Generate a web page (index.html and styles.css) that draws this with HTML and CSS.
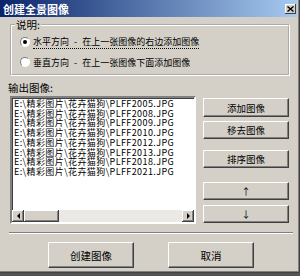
FILE: index.html
```html
<!DOCTYPE html>
<html lang="zh-CN">
<head>
    <meta charset="UTF-8">
    <meta name="viewport" content="width=device-width, initial-scale=1.0">
    <title>创建全景图像</title>
    <link rel="stylesheet" href="styles.css">
</head>
<body>
    <div class="window">
        <div class="titlebar">
            <span class="title">创建全景图像</span>
            <span class="close">
                <svg width="7" height="6" viewBox="0 0 7 6"><path d="M0.5 0.5 L6.5 5.5 M6.5 0.5 L0.5 5.5" stroke="#000" stroke-width="1.4" fill="none"/></svg>
            </span>
        </div>

        <div class="content">
            <fieldset class="group">
                <legend>说明:</legend>
                <label class="option">
                    <span class="radio checked"></span>
                    <span class="focus">水平方向 - 在上一张图像的右边添加图像</span>
                </label>
                <label class="option">
                    <span class="radio"></span>
                    <span>垂直方向 - 在上一张图像下面添加图像</span>
                </label>
            </fieldset>

            <div class="caption">输出图像:</div>

            <div class="main">
                <div class="listbox">
                    <ul class="items">
                        <li>E:\精彩图片\花卉猫狗\PLFF2005.JPG</li>
                        <li>E:\精彩图片\花卉猫狗\PLFF2008.JPG</li>
                        <li>E:\精彩图片\花卉猫狗\PLFF2009.JPG</li>
                        <li>E:\精彩图片\花卉猫狗\PLFF2010.JPG</li>
                        <li>E:\精彩图片\花卉猫狗\PLFF2012.JPG</li>
                        <li>E:\精彩图片\花卉猫狗\PLFF2013.JPG</li>
                        <li>E:\精彩图片\花卉猫狗\PLFF2018.JPG</li>
                        <li>E:\精彩图片\花卉猫狗\PLFF2021.JPG</li>
                    </ul>
                    <div class="hscroll">
                        <span class="arrow"><i class="tri-left"></i></span>
                        <span class="thumb"></span>
                        <span class="track"></span>
                        <span class="arrow"><i class="tri-right"></i></span>
                    </div>
                </div>

                <div class="side">
                    <button class="btn add">添加图像</button>
                    <button class="btn remove">移去图像</button>
                    <button class="btn sort">排序图像</button>
                    <button class="btn up">↑</button>
                    <button class="btn down">↓</button>
                </div>
            </div>

            <div class="separator"></div>

            <div class="footer">
                <button class="btn big">创建图像</button>
                <button class="btn big">取消</button>
            </div>
        </div>
    </div>
</body>
</html>
```

FILE: styles.css
```css
* {
    box-sizing: border-box;
}

html, body {
    margin: 0;
    padding: 0;
}

body {
    width: 300px;
    height: 276px;
    overflow: hidden;
    background-color: #55534f;
    font-family: "Noto Sans CJK SC", "Liberation Sans", sans-serif;
    font-size: 10.5px;
    color: #000;
}

.window {
    width: 300px;
    height: 273px;
    padding-right: 3px;
    background-color: #d4d0c8;
    box-shadow: inset -1px -1px #404040, inset -2px -2px #808080;
}

/* title bar */
.titlebar {
    height: 17px;
    display: flex;
    align-items: center;
    justify-content: space-between;
    padding: 0 1px 0 3px;
    background: linear-gradient(to right, #0a246a, #a6caf0);
}

.title {
    color: #fff;
    font-weight: bold;
    font-size: 11px;
    line-height: 12px;
}

.close {
    width: 11px;
    height: 10px;
    display: flex;
    align-items: center;
    justify-content: center;
    background-color: #d4d0c8;
    box-shadow: inset -1px -1px #404040, inset 1px 1px #fff;
}

.content {
    padding: 2px 0 0 10px;
}

/* group box */
.group {
    width: 280px;
    margin: 0;
    padding: 1px 0 2px 8px;
    border: 2px groove #fff;
}

.group legend {
    margin-left: -5px;
    padding: 0 1px;
    line-height: 12px;
    background-color: #d4d0c8;
}

.option {
    height: 20px;
    display: flex;
    align-items: center;
    gap: 3px;
    font-size: 9px;
    word-spacing: 3px;
}

.radio {
    position: relative;
    width: 10px;
    height: 10px;
    border-radius: 50%;
    background-color: #fff;
    border: 1px solid;
    border-color: #808080 #fff #fff #808080;
}

.radio.checked::after {
    content: "";
    position: absolute;
    left: 2px;
    top: 2px;
    width: 4px;
    height: 4px;
    border-radius: 50%;
    background-color: #000;
}

.focus {
    line-height: 12px;
    border-bottom: 1px dotted #000;
}

.caption {
    margin: 6px 0 0 -2px;
    line-height: 12px;
}

/* list + buttons */
.main {
    display: flex;
    margin-top: 2px;
}

.listbox {
    width: 186px;
    height: 128px;
    display: flex;
    flex-direction: column;
    background-color: #fff;
    border: 2px solid;
    border-color: #808080 #fff #fff #808080;
    box-shadow: inset 1px 1px #404040;
}

.items {
    flex: 1;
    margin: 0;
    padding: 1px 0 0 2px;
    list-style: none;
    font-size: 9px;
    line-height: 9.7px;
    letter-spacing: 0.4px;
    white-space: nowrap;
    overflow: hidden;
}

.hscroll {
    height: 12px;
    display: flex;
}

.arrow,
.thumb {
    height: 12px;
    background-color: #d4d0c8;
    box-shadow: inset -1px -1px #404040, inset 1px 1px #fff, inset -2px -2px #808080;
}

.arrow {
    width: 12px;
    display: flex;
    align-items: center;
    justify-content: center;
}

.thumb {
    width: 35px;
}

.track {
    flex: 1;
    background-color: #ebe9e5;
}

.tri-left,
.tri-right {
    width: 0;
    height: 0;
    border-top: 3px solid transparent;
    border-bottom: 3px solid transparent;
}

.tri-left {
    border-right: 3px solid #000;
}

.tri-right {
    border-left: 3px solid #000;
}

.side {
    width: 86px;
    margin-left: 7px;
    display: flex;
    flex-direction: column;
}

.btn {
    height: 18px;
    padding: 0;
    font-family: inherit;
    font-size: 9.5px;
    color: #000;
    background-color: #d4d0c8;
    border: 1px solid;
    border-color: #fff #404040 #404040 #fff;
    box-shadow: inset -1px -1px #808080;
}

.add {
    margin-top: 2px;
    height: 19px;
}

.remove {
    margin-top: 4px;
}

.sort {
    margin-top: 11px;
}

.up {
    margin-top: 14px;
}

.down {
    margin-top: 5px;
}

.separator {
    width: 284px;
    height: 2px;
    margin: 8px 0 0 -1px;
    border-top: 1px solid #808080;
    border-bottom: 1px solid #fff;
}

.footer {
    display: flex;
    gap: 34px;
    padding: 8px 0 0 38px;
}

.big {
    width: 86px;
    height: 26px;
    font-size: 10.5px;
}
```
